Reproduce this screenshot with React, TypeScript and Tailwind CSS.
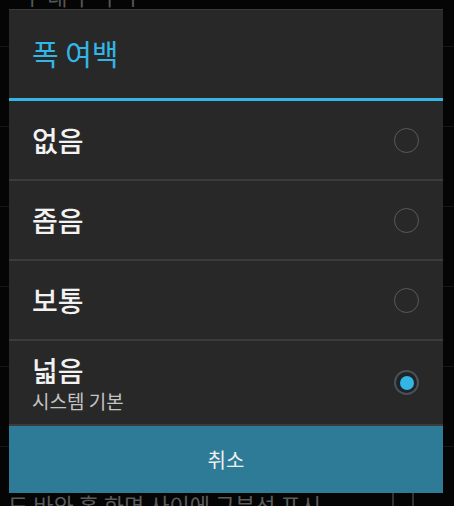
import React from 'react';

const font = { fontFamily: '"Noto Sans CJK KR", "Noto Sans", sans-serif' };

const options = [
  { label: '없음' },
  { label: '좁음' },
  { label: '보통' },
  { label: '넓음', sub: '시스템 기본', checked: true },
];

function Radio({ checked }: { checked?: boolean }) {
  if (checked) {
    return (
      <div className="w-[25px] h-[25px] rounded-full border-2 border-[#4a5257] bg-[#1e2428] flex items-center justify-center">
        <div className="w-[14px] h-[14px] rounded-full bg-[#33b5e5]" />
      </div>
    );
  }
  return <div className="w-[25px] h-[25px] rounded-full border-[1.5px] border-[#5a5a5a]" />;
}

export default function App() {
  return (
    <div className="relative w-[454px] h-[506px] overflow-hidden bg-[#050505]" style={font}>
      {/* underlying settings list */}
      <div className="flex flex-col">
        <div className="h-[47px] border-b border-[#161616] px-[22px] text-[#555] text-[22px] leading-none">
          <div className="-mt-[16px]">ㅣ 대 ㅏ ㅓ ㅣ</div>
        </div>
        <div className="h-[80px] border-b border-[#161616]" />
        <div className="h-[80px] border-b border-[#161616]" />
        <div className="h-[80px] border-b border-[#161616]" />
        <div className="h-[80px] border-b border-[#161616]" />
        <div className="h-[80px] border-b border-[#161616]" />
        <div className="flex items-start justify-between pl-[8px] pr-[40px] pt-[46px]">
          <span className="text-[#5c5c5c] text-[22px] leading-none">도 바와 홈 화면 사이에 구분선 표시</span>
          <div className="w-[22px] h-[22px] border-2 border-[#333] mt-[-4px]" />
        </div>
      </div>

      {/* dialog */}
      <div className="absolute top-[9px] left-[9px] w-[434px] bg-[#282828] border-t border-[#3a3a3a] flex flex-col">
        <div className="h-[88px] flex items-center px-[23px] text-[#33b5e5] text-[29px]">
          폭 여백
        </div>
        <div className="h-[3px] bg-[#33b5e5]" />
        {options.map((o, i) => (
          <div
            key={o.label}
            className={`flex items-center justify-between px-[23px] pr-[24px] border-b-2 border-[#3c3c3c] ${
              i === 3 ? 'h-[85px]' : 'h-[80px]'
            }`}
          >
            <div className="flex flex-col">
              <span className="text-[#f2f2f2] text-[28px] font-medium leading-[34px]">{o.label}</span>
              {o.sub && <span className="text-[#c4c4c4] text-[19px] leading-[24px] mt-[2px]">{o.sub}</span>}
            </div>
            <Radio checked={o.checked} />
          </div>
        ))}
        <div className="h-[67px] bg-[#2e7b98] flex items-center justify-center text-[#f0f0f0] text-[20px]">
          취소
        </div>
      </div>
    </div>
  );
}
